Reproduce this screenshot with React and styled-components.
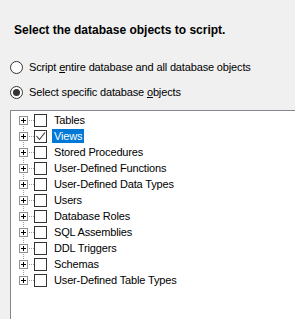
import React from 'react';
import styled, { createGlobalStyle } from 'styled-components';

const GlobalStyle = createGlobalStyle`
    html, body {
        margin: 0;
        padding: 0;
        background: #f0f0f0;
    }
    body {
        font-family: "Liberation Sans", Arial, sans-serif;
        font-size: 11px;
        letter-spacing: -0.15px;
        color: #000;
    }
`;

const Page = styled.div`
    width: 295px;
    height: 319px;
    overflow: hidden;
    display: flex;
    flex-direction: column;
    padding: 21px 0 0 10px;
    box-sizing: border-box;
`;

const Title = styled.h1`
    margin: 0 0 0 4px;
    font-size: 12px;
    font-weight: bold;
    line-height: 18px;
    letter-spacing: 0;
`;

const Options = styled.div`
    display: flex;
    flex-direction: column;
    gap: 9px;
    margin-top: 20px;
`;

const RadioRow = styled.label`
    display: flex;
    align-items: center;
    gap: 6px;
    height: 16px;
    line-height: 16px;
`;

const Radio = styled.span`
    width: 11px;
    height: 11px;
    border: 1px solid #333;
    border-radius: 50%;
    background: #fff;
    display: flex;
    align-items: center;
    justify-content: center;

    &::after {
        content: '';
        width: 7px;
        height: 7px;
        border-radius: 50%;
        background: ${p => (p.$checked ? '#333' : 'transparent')};
    }
`;

const Key = styled.u``;

const Tree = styled.div`
    margin-top: 10px;
    flex: 1;
    background: #fff;
    border-top: 1px solid #828790;
    border-left: 1px solid #828790;
    padding: 1px 0 0 0;
    display: flex;
    flex-direction: column;
`;

const Node = styled.div`
    position: relative;
    display: flex;
    align-items: center;
    height: 16px;
    padding-left: 8px;
`;

const Expander = styled.span`
    width: 7px;
    height: 7px;
    border: 1px solid #919191;
    background: #fff;
    position: relative;
    flex: none;

    &::before {
        content: '';
        position: absolute;
        left: 1px;
        top: 3px;
        width: 5px;
        height: 1px;
        background: #000;
    }
    &::after {
        content: '';
        position: absolute;
        left: 3px;
        top: 1px;
        width: 1px;
        height: 5px;
        background: #000;
    }
`;

const Connector = styled.span`
    width: 6px;
    height: 1px;
    flex: none;
    background-image: linear-gradient(to right, #a0a0a0 1px, transparent 1px);
    background-size: 2px 1px;
    background-position: 1px 0;
`;

const VLine = styled.span`
    position: absolute;
    left: 12px;
    top: ${p => (p.$first ? '8px' : '0')};
    height: ${p => (p.$last ? '8px' : '16px')};
    width: 1px;
    background-image: linear-gradient(to bottom, #a0a0a0 1px, transparent 1px);
    background-size: 1px 2px;
`;

const Check = styled.span`
    width: 11px;
    height: 11px;
    border: 1px solid #333;
    background: #fff;
    flex: none;
    display: flex;
    align-items: center;
    justify-content: center;
`;

const Label = styled.span`
    margin-left: 5px;
    padding: 0 2px;
    height: 14px;
    line-height: 14px;
    white-space: nowrap;
    background: ${p => (p.$selected ? '#0078d7' : 'transparent')};
    color: ${p => (p.$selected ? '#fff' : '#000')};
`;

const items = [
    'Tables',
    'Views',
    'Stored Procedures',
    'User-Defined Functions',
    'User-Defined Data Types',
    'Users',
    'Database Roles',
    'SQL Assemblies',
    'DDL Triggers',
    'Schemas',
    'User-Defined Table Types',
];

const App = () => {
    return (
        <Page>
            <GlobalStyle />
            <Title>Select the database objects to script.</Title>
            <Options>
                <RadioRow>
                    <Radio />
                    <span>Script <Key>e</Key>ntire database and all database objects</span>
                </RadioRow>
                <RadioRow>
                    <Radio $checked />
                    <span>Select specific database <Key>o</Key>bjects</span>
                </RadioRow>
            </Options>
            <Tree>
                {items.map((name, i) => (
                    <Node key={name}>
                        <VLine $first={i === 0} $last={i === items.length - 1} />
                        <Expander />
                        <Connector />
                        <Check>
                            {name === 'Views' && (
                                <svg width="11" height="11" viewBox="0 0 11 11">
                                    <path d="M1.5 5 L4.5 8.5 L10 1.5" stroke="#333" strokeWidth="1.1" fill="none" />
                                </svg>
                            )}
                        </Check>
                        <Label $selected={name === 'Views'}>{name}</Label>
                    </Node>
                ))}
            </Tree>
        </Page>
    );
};

export default App;
